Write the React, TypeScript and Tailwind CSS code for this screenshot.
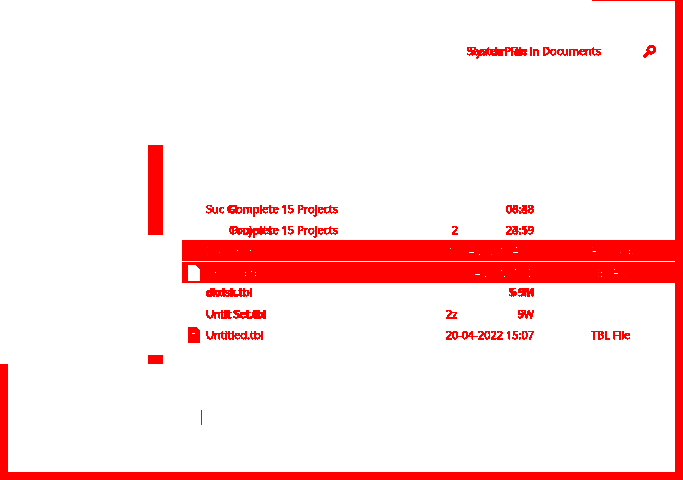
const red = "bg-[#ff0000]";

function Doc({ fill, dash }: { fill: string; dash?: boolean }) {
  return (
    <svg width="12" height="16" viewBox="0 0 12 16" className="shrink-0">
      <path d="M0 0H8L12 4V16H0Z" fill={fill} />
      {dash && <rect x="4" y="6" width="3" height="1" fill="#ffffff" />}
    </svg>
  );
}

function Layer({ left = [], right = [], className = "" }: { left?: string[]; right?: string[]; className?: string }) {
  return (
    <div className={`relative h-[15px] shrink-0 ${className}`}>
      {left.map((t) => (
        <span key={t} className="absolute left-0 top-0 whitespace-pre leading-[15px]">
          {t}
        </span>
      ))}
      {right.map((t) => (
        <span key={t} className="absolute right-0 top-0 whitespace-pre leading-[15px]">
          {t}
        </span>
      ))}
    </div>
  );
}

function Row({
  name,
  nameRight,
  date,
  dateLeft,
  type,
  h,
  icon,
  selected,
}: {
  name?: string[];
  nameRight?: string[];
  date: string[];
  dateLeft?: string;
  type?: string;
  h: string;
  icon?: React.ReactNode;
  selected?: boolean;
}) {
  return (
    <div
      className={`flex items-center pl-[6px] ${h} ${
        selected ? `${red} text-[#fff7f7]` : "text-[#ff0000] [-webkit-text-stroke:0.25px_#ff0000]"
      }`}
    >
      <div className="flex w-3 shrink-0 items-center">{icon}</div>
      <Layer left={name} right={nameRight} className="ml-[6px] w-[132px]" />
      <Layer left={dateLeft ? [dateLeft] : []} right={date} className="ml-[108px] w-[88px]" />
      <span className="ml-[57px] whitespace-pre leading-[15px]">{type}</span>
    </div>
  );
}

export default function App() {
  return (
    <div
      className="flex h-[480px] w-[683px] flex-col overflow-hidden bg-white text-[11px] brightness-[.55] contrast-[100]"
      style={{ fontFamily: '"Open Sans", Arial, sans-serif' }}
    >
      <div className="flex min-h-0 flex-1">
        <div className="flex w-2 shrink-0 flex-col justify-end">
          <div className={`h-[108px] ${red}`} />
        </div>
        <div className="flex min-w-0 flex-1 flex-col">
          <div className={`h-px w-[83px] self-end ${red}`} />
          <div className="flex h-[144px] pt-[42px] text-[#ff0000] [-webkit-text-stroke:0.25px_#ff0000]">
            <Layer left={["System File"]} right={["Search Plan In Documents"]} className="ml-[462px] w-[131px]" />
            <svg width="14" height="14" viewBox="0 0 14 14" className="ml-[41px] mt-[2px]">
              <circle cx="9.2" cy="4.8" r="3.4" fill="none" stroke="#ff0000" strokeWidth="2.2" />
              <path d="M6.5 7.5L2 12" stroke="#ff0000" strokeWidth="2.6" />
            </svg>
          </div>
          <div className="flex h-[219px] pl-[140px]">
            <div className="flex w-[15px] shrink-0 flex-col justify-between">
              <div className={`h-[90px] ${red}`} />
              <div className={`h-[9px] ${red}`} />
            </div>
            <div className="ml-[19px] min-w-0 flex-1 pt-[54px]">
              <Row h="h-[21px] pb-[2px]" name={["Suc Gl"]} nameRight={["Complete 15 Projects"]} date={["08:48", "06:38"]} />
              <Row h="h-[20px] pb-[2px]" nameRight={["Projects                       ", "Complete 15 Projects"]} dateLeft="  2" date={["24:19", "23:59"]} />
              <Row h="h-[21px]" selected name={["Documents.tbl"]} date={["20-04-2022 14:11"]} type="File folder" />
              <div className="h-px" />
              <Row h="h-[21px]" selected icon={<Doc fill="#ffffff" />} name={["Untitled.tbl"]} date={["10-04-2022 1:15"]} type="TBL File" />
              <Row h="h-[20px] pb-[3px]" name={["dkdsk.tbl", "akdsk.tbl"]} date={["6 9H", "5 9M"]} />
              <Row h="h-[21px]" name={["Untit Set.tbl", "Unlit Set.tbl"]} dateLeft="2z" date={["5W", "9W"]} />
              <Row h="h-[21px]" icon={<Doc fill="#ff0000" dash />} name={["Untitled.tbl"]} date={["20-04-2022 15:07"]} type="TBL File" />
            </div>
          </div>
          <div className="ml-[193px] mt-[46px] h-[15px] w-px bg-[#ff0000]" />
        </div>
        <div className={`w-2 shrink-0 ${red}`} />
      </div>
      <div className={`h-2 shrink-0 ${red}`} />
    </div>
  );
}
